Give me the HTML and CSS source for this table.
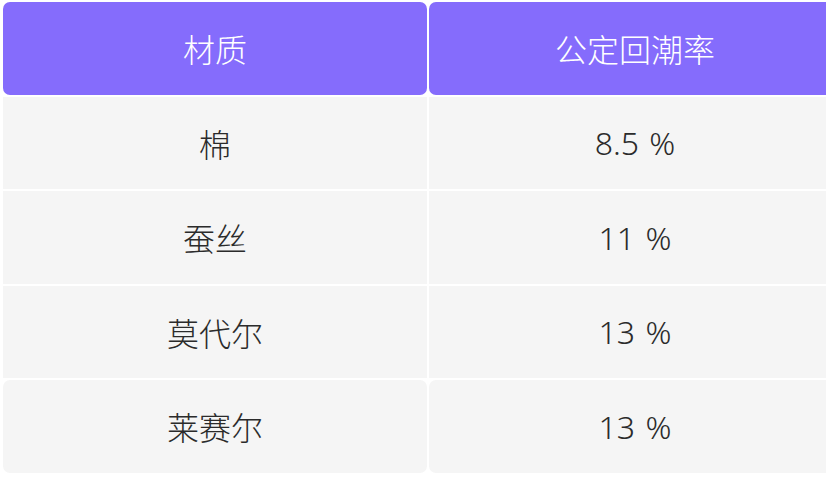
FILE: index.html
```html
<!DOCTYPE html>
<html lang="zh">
<head>
<meta charset="utf-8">
<link rel="stylesheet" href="styles.css">
</head>
<body>
<div class="table">
  <div class="cell head">材质</div>
  <div class="cell head">公定回潮率</div>
  <div class="cell">棉</div>
  <div class="cell">8.5 %</div>
  <div class="cell">蚕丝</div>
  <div class="cell">11 %</div>
  <div class="cell">莫代尔</div>
  <div class="cell">13 %</div>
  <div class="cell last">莱赛尔</div>
  <div class="cell last">13 %</div>
</div>
</body>
</html>
```
FILE: styles.css
```css
html, body {
  margin: 0;
  padding: 0;
  background: #ffffff;
  overflow: hidden;
}
body {
  font-family: "Noto Sans", "Noto Sans CJK SC", sans-serif;
}
.table {
  display: grid;
  grid-template-columns: 424px 412px;
  grid-auto-rows: 92.5px;
  gap: 2px;
  padding: 2px 0 0 3px;
  width: max-content;
}
.cell {
  display: flex;
  align-items: center;
  justify-content: center;
  background: #f5f5f5;
  color: #2b2b2b;
  font-size: 32px;
  font-weight: 300;
  word-spacing: 2px;
}
.head {
  background: #856cfc;
  color: #ffffff;
  border-radius: 7px;
}
.last {
  border-radius: 7px;
}
```
